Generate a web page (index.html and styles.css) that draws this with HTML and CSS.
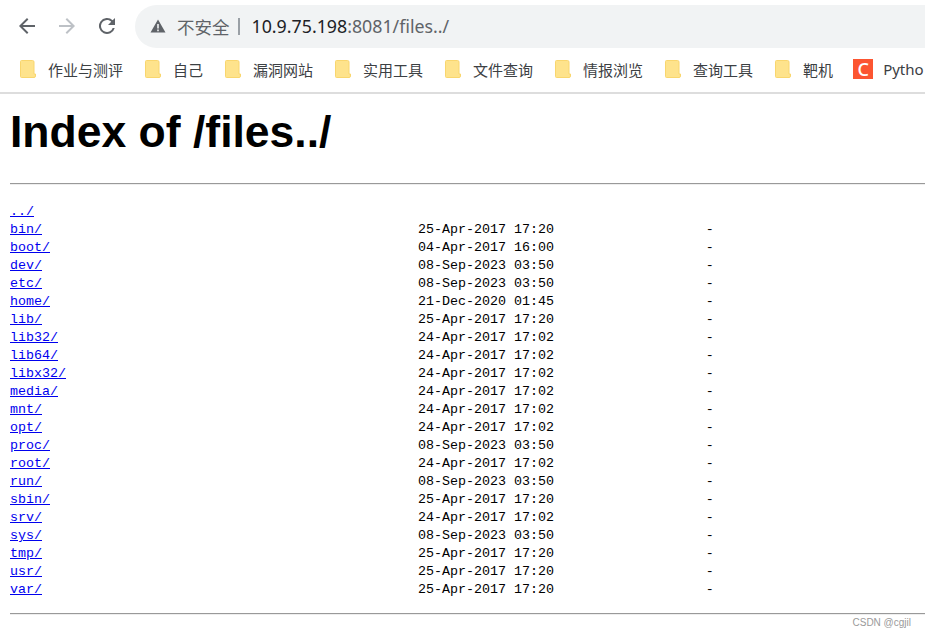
FILE: index.html
```html
<!DOCTYPE html>
<html lang="en">
<head>
   <meta charset="UTF-8">
   <title>Index of /files../</title>
   <link rel="stylesheet" href="styles.css">
</head>
<body>
   <div class="chrome">
      <div class="toolbar">
         <svg class="nav_icon" viewBox="0 0 24 24"><path d="M20 11H7.8l5.6-5.6L12 4l-8 8 8 8 1.4-1.4L7.8 13H20z" fill="#5f6368"/></svg>
         <svg class="nav_icon" viewBox="0 0 24 24"><path d="M4 11h12.2l-5.6-5.6L12 4l8 8-8 8-1.4-1.4 5.6-5.6H4z" fill="#bdc1c6"/></svg>
         <svg class="nav_icon" viewBox="0 0 24 24"><path d="M17.65 6.35A8 8 0 1 0 19.73 14h-2.08A6 6 0 1 1 12 6c1.66 0 3.14.69 4.22 1.78L13 11h7V4z" fill="#5f6368"/></svg>
         <div class="omnibox">
            <svg class="warn_icon" viewBox="0 0 16 16"><path d="M8 1.5 15.5 14.5H.5zM7.2 6v4.6h1.6V6zm0 5.6v1.6h1.6v-1.6z" fill="#5f6368" fill-rule="evenodd"/></svg>
            <span class="not_secure">不安全</span>
            <span class="sep"></span>
            <span class="url">10.9.75.198<span class="url_rest">:8081/files../</span></span>
         </div>
      </div>
      <div class="bookmarks">
         <div class="bookmark"><svg class="folder" viewBox="0 0 16 18"><use href="#folder"/></svg>作业与测评</div>
         <div class="bookmark"><svg class="folder" viewBox="0 0 16 18"><use href="#folder"/></svg>自己</div>
         <div class="bookmark"><svg class="folder" viewBox="0 0 16 18"><use href="#folder"/></svg>漏洞网站</div>
         <div class="bookmark"><svg class="folder" viewBox="0 0 16 18"><use href="#folder"/></svg>实用工具</div>
         <div class="bookmark"><svg class="folder" viewBox="0 0 16 18"><use href="#folder"/></svg>文件查询</div>
         <div class="bookmark"><svg class="folder" viewBox="0 0 16 18"><use href="#folder"/></svg>情报浏览</div>
         <div class="bookmark"><svg class="folder" viewBox="0 0 16 18"><use href="#folder"/></svg>查询工具</div>
         <div class="bookmark"><svg class="folder" viewBox="0 0 16 18"><use href="#folder"/></svg>靶机</div>
         <div class="bookmark"><span class="csdn">C</span>Pytho</div>
      </div>
   </div>

   <svg class="defs" width="0" height="0">
      <symbol id="folder" viewBox="0 0 16 18">
         <path d="M1.5.5h11a1.5 1.5 0 0 1 1.5 1.5v12h1.5v2a1.5 1.5 0 0 1-1.5 1.5H1.5A1 1 0 0 1 .5 16.500V1.500a1 1 0 0 1 1-1z" fill="#fee38c" stroke="#f9d66e"/>
      </symbol>
   </svg>

   <div class="listing">
      <h1>Index of /files../</h1>
      <hr>
<pre><a href="#">../</a>
<a href="#">bin/</a>                                               25-Apr-2017 17:20                   -
<a href="#">boot/</a>                                              04-Apr-2017 16:00                   -
<a href="#">dev/</a>                                               08-Sep-2023 03:50                   -
<a href="#">etc/</a>                                               08-Sep-2023 03:50                   -
<a href="#">home/</a>                                              21-Dec-2020 01:45                   -
<a href="#">lib/</a>                                               25-Apr-2017 17:20                   -
<a href="#">lib32/</a>                                             24-Apr-2017 17:02                   -
<a href="#">lib64/</a>                                             24-Apr-2017 17:02                   -
<a href="#">libx32/</a>                                            24-Apr-2017 17:02                   -
<a href="#">media/</a>                                             24-Apr-2017 17:02                   -
<a href="#">mnt/</a>                                               24-Apr-2017 17:02                   -
<a href="#">opt/</a>                                               24-Apr-2017 17:02                   -
<a href="#">proc/</a>                                              08-Sep-2023 03:50                   -
<a href="#">root/</a>                                              24-Apr-2017 17:02                   -
<a href="#">run/</a>                                               08-Sep-2023 03:50                   -
<a href="#">sbin/</a>                                              25-Apr-2017 17:20                   -
<a href="#">srv/</a>                                               24-Apr-2017 17:02                   -
<a href="#">sys/</a>                                               08-Sep-2023 03:50                   -
<a href="#">tmp/</a>                                               25-Apr-2017 17:20                   -
<a href="#">usr/</a>                                               25-Apr-2017 17:20                   -
<a href="#">var/</a>                                               25-Apr-2017 17:20                   -
</pre>
      <hr>
   </div>
   <div class="watermark">CSDN @cgjil</div>
</body>
</html>
```

FILE: styles.css
```css
html, body{
    margin: 0;
    height: 640px;
    overflow: hidden;
    background: white;
}

body{
    position: relative;
    font-family: "Liberation Sans", sans-serif;
}

.chrome{
    height: 92px;
    border-bottom: 2px solid #dddddd;
    overflow: hidden;
    font-family: "Noto Sans", "Noto Sans CJK SC", sans-serif;
}

.toolbar{
    display: flex;
    align-items: center;
    height: 48px;
    padding: 4px 0 0 15px;
    box-sizing: border-box;
}

.nav_icon{
    width: 24px;
    height: 24px;
    margin-right: 16px;
    flex: none;
}

.omnibox{
    display: flex;
    align-items: center;
    flex: none;
    width: 900px;
    height: 43px;
    padding-left: 15px;
    box-sizing: border-box;
    background: #f1f3f4;
    border-radius: 22px;
}

.warn_icon{
    width: 16px;
    height: 16px;
    margin-right: 11px;
}

.not_secure{
    font-family: "Noto Sans CJK SC", sans-serif;
    font-size: 17.5px;
    color: #5f6368;
}

.sep{
    width: 2px;
    height: 17px;
    margin: 0 12px 0 8px;
    background: #9aa0a6;
}

.url{
    font-size: 17.8px;
    color: #202124;
    white-space: nowrap;
}

.url_rest{
    color: #5f6368;
}

.bookmarks{
    display: flex;
    align-items: center;
    height: 42px;
    padding-left: 20px;
    white-space: nowrap;
}

.bookmark{
    display: flex;
    align-items: center;
    flex: none;
    margin-right: 22px;
    font-family: "Noto Sans CJK SC", sans-serif;
    font-size: 15px;
    color: #3c4043;
}

.bookmark:last-child{
    margin-right: 0;
    font-family: "Noto Sans", sans-serif;
}

.folder{
    width: 16px;
    height: 18px;
    margin-right: 12px;
}

.csdn{
    display: flex;
    align-items: center;
    justify-content: center;
    width: 20px;
    height: 20px;
    margin: 0 10px 0 -2px;
    background: #fc5531;
    color: white;
    font-family: "Noto Sans", sans-serif;
    font-size: 18px;
    font-weight: 500;
}

.defs{
    position: absolute;
}

.listing{
    padding-left: 10px;
}

h1{
    margin: 0;
    padding-top: 12px;
    font-size: 44.5px;
    line-height: 52px;
    color: black;
}

hr{
    height: 0;
    margin: 25px 0 0;
    border: none;
    border-top: 1px solid #999999;
    border-bottom: 1px solid #eeeeee;
}

pre{
    margin: 18px 0 0;
    font-family: "Liberation Mono", monospace;
    font-size: 13.333px;
    line-height: 18px;
    color: black;
}

pre + hr{
    margin-top: 14px;
}

a{
    color: #0000ee;
}

.watermark{
    position: absolute;
    top: 617px;
    right: 14px;
    font-size: 10px;
    color: #9a9a9a;
}
```
